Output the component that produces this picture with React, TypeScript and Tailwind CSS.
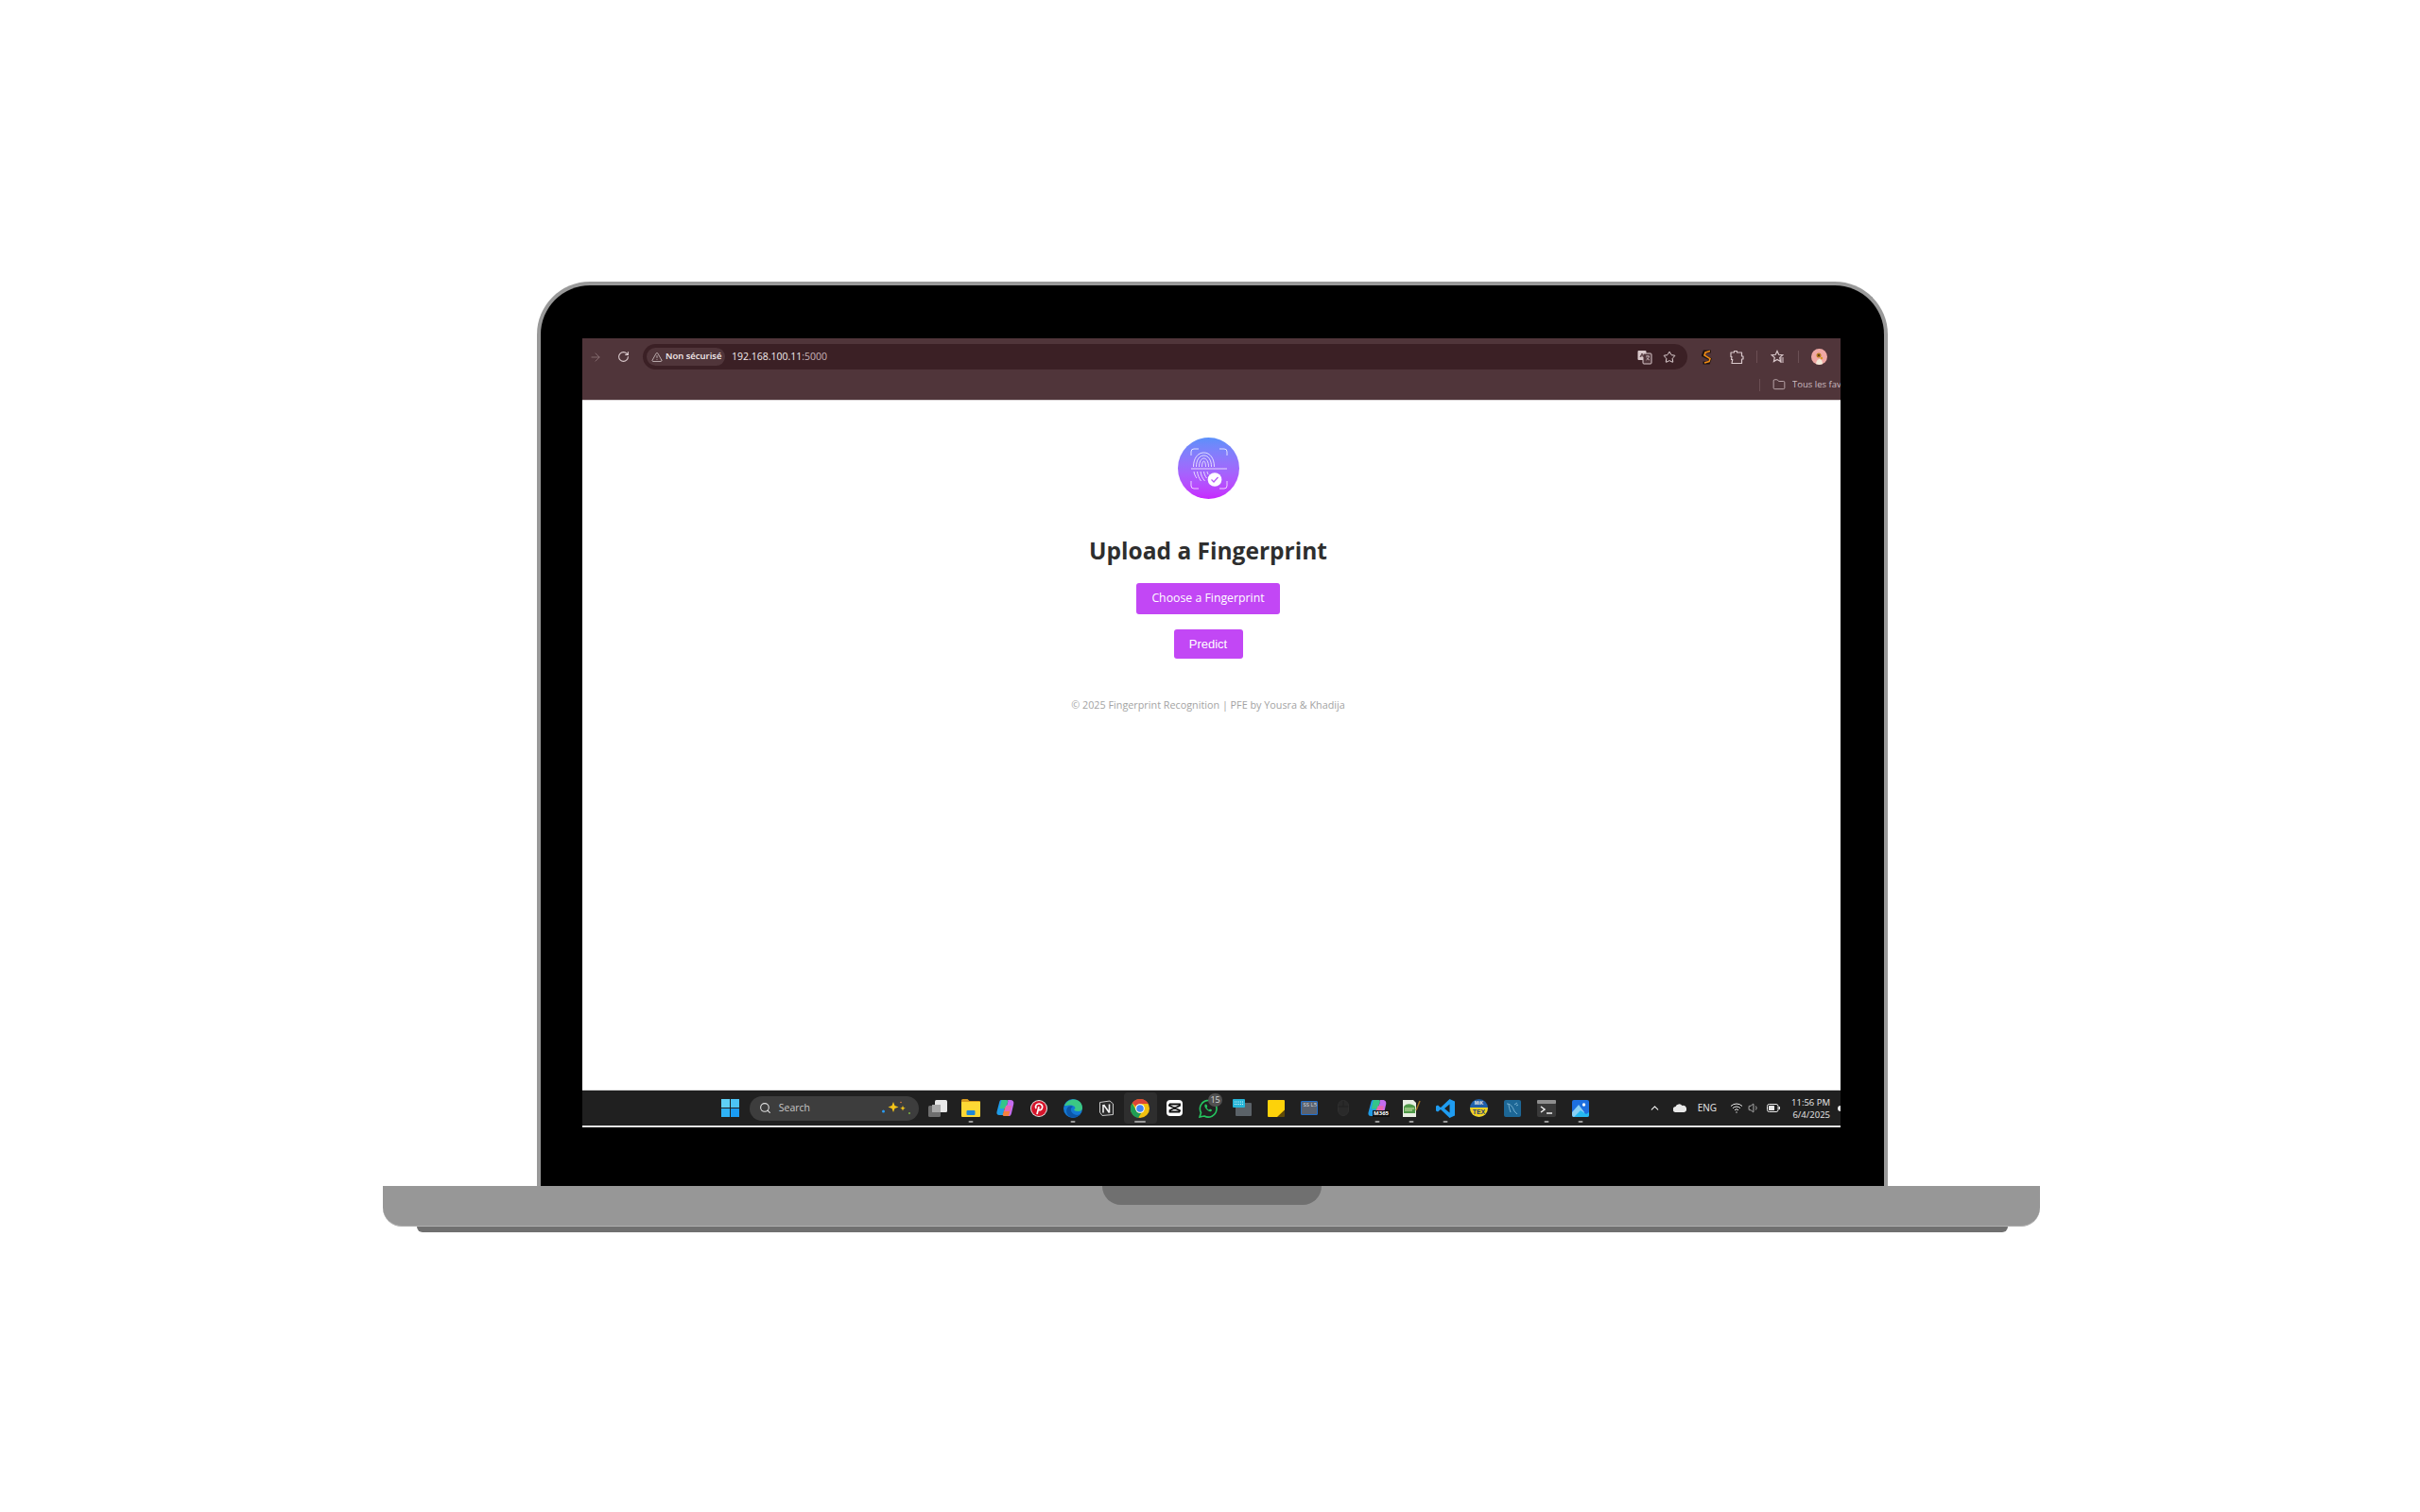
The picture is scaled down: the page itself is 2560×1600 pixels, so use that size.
import { ArrowRight, ChevronUp, Folder, RotateCw, Search, Star, TriangleAlert, Volume1 } from "lucide-react";
import type { ReactNode } from "react";

const segoe = "font-['Open_Sans','Noto_Sans',sans-serif]";

function Divider({ className }: { className: string }) {
	return <span className={`w-px bg-[#6b4f54] ${className}`} />;
}

function TranslateIcon() {
	return (
		<svg width="16" height="16" viewBox="0 0 16 16" aria-hidden="true">
			<rect x="0.5" y="1" width="9" height="10" rx="1" fill="#d9c8cb" />
			<rect x="6" y="4" width="9" height="11" rx="1" fill="#50353a" stroke="#d9c8cb" />
			<path d="M3 8l2-4 2 4M3.8 6.8h2.4" stroke="#50353a" fill="none" />
			<path d="M9 7h4M11 6v1M12.5 7c-.5 2-1.500 3-3 4M10 8.500c.500 1 1.500 2 3 2.500" stroke="#d9c8cb" fill="none" strokeWidth="0.8" />
		</svg>
	);
}

function ExtensionS() {
	return (
		<svg width="12" height="16" viewBox="0 0 12 16" aria-hidden="true">
			<path d="M10 2 3 2 1.500 6 9 10 7.500 14 1.500 14" fill="none" stroke="#1c1210" strokeWidth="3" />
			<path d="M9 1.500 4 3 3 6 9 9.500 8 12.500 3 14" fill="none" stroke="#f08c14" strokeWidth="1.600" />
		</svg>
	);
}

function PuzzleIcon() {
	return (
		<svg width="15" height="16" viewBox="0 0 15 16" aria-hidden="true">
			<path
				d="M1 3h3.500V1.500h3V3H12.500v4H14v3h-1.500v4.500H2l.8-4H1.500l.5-3H1z"
				fill="none"
				stroke="#d9c8cb"
				strokeWidth="1.200"
				strokeLinejoin="round"
			/>
		</svg>
	);
}

function FavoritesIcon() {
	return (
		<svg width="15" height="15" viewBox="0 0 15 15" aria-hidden="true">
			<path
				d="M7 1.500 8.700 5.300l4.100.4-3.100 2.700.9 4.100L7 10.400l-3.600 2.100.9-4.100L1.200 5.700l4.100-.4z"
				fill="none"
				stroke="#d9c8cb"
				strokeWidth="1.200"
			/>
			<path d="M10 9h4M10 11h4M10 13h4" stroke="#d9c8cb" />
		</svg>
	);
}

function Avatar() {
	return (
		<span className="flex h-[17px] w-[17px] items-center justify-center overflow-hidden rounded-full bg-[#f0a8a4]">
			<svg width="17" height="17" viewBox="0 0 17 17" aria-hidden="true">
				<path d="M5 17c0-4 2-6 4-6s3 2 3 6z" fill="#f2ead8" />
				<circle cx="8" cy="7" r="2.500" fill="#b97a1c" />
				<circle cx="8" cy="7" r="1" fill="#4a2d12" />
				<circle cx="11" cy="10" r="1.200" fill="#d89a22" />
			</svg>
		</span>
	);
}

function BrowserChrome() {
	return (
		<div className="h-[66px] shrink-0 border-b border-[#d8d2d3] bg-[#50353a]">
			<div className="flex h-[38px] items-center pt-[1px] pl-[7px]">
				<ArrowRight className="h-[14px] w-[14px] text-[#8a7276]" strokeWidth={1.5} />
				<RotateCw className="ml-[16px] h-[13px] w-[13px] text-[#dccbce]" strokeWidth={2} />
				<div className="ml-[14px] flex h-[27px] w-[1105px] items-center rounded-full bg-[#3b2025] pr-[12px] pl-[4px]">
					<div className="flex h-[19px] w-[83px] items-center gap-[3px] rounded-full bg-[#50353a] pl-[5px]">
						<TriangleAlert className="h-[12px] w-[12px] shrink-0 text-[#f0e6e7]" strokeWidth={1.3} />
						<span className={`${segoe} text-[9.500px] font-semibold whitespace-nowrap text-[#f4eced]`}>Non sécurisé</span>
					</div>
					<span className={`${segoe} ml-[7px] text-[10.500px] text-[#f4eced]`}>
						192.168.100.11<span className="text-[#c9b5b9]">:5000</span>
					</span>
					<span className="ml-auto flex items-center gap-[11px]">
						<TranslateIcon />
						<Star className="h-[14px] w-[14px] text-[#e5d8da]" strokeWidth={1.7} />
					</span>
				</div>
				<span className="ml-[15px] flex w-[12px] justify-center">
					<ExtensionS />
				</span>
				<span className="ml-[18px] flex w-[15px] justify-center">
					<PuzzleIcon />
				</span>
				<Divider className="ml-[13px] h-[13px]" />
				<span className="ml-[14px] flex w-[15px] justify-center">
					<FavoritesIcon />
				</span>
				<Divider className="ml-[14px] h-[13px]" />
				<span className="ml-[13px]">
					<Avatar />
				</span>
			</div>
			<div className="flex h-[22px] items-center justify-end overflow-hidden">
				<Divider className="h-[13px]" />
				<Folder className="ml-[13px] h-[14px] w-[14px] shrink-0 text-[#d9c8cb]" strokeWidth={1.3} />
				<span className={`${segoe} ml-[7px] w-[51px] shrink-0 overflow-hidden text-[9.500px] whitespace-nowrap text-[#cdbcc0]`}>Tous les favoris</span>
			</div>
		</div>
	);
}

function FingerprintLogo() {
	return (
		<div className="flex h-[65px] w-[65px] items-center justify-center rounded-full bg-gradient-to-b from-[#5a90fa] to-[#c724fe]">
			<svg width="65" height="65" viewBox="0 0 65 65" fill="none" stroke="#fff" aria-hidden="true">
				<g strokeWidth="0.9" opacity="0.85">
					<path d="M14 19v-4a3 3 0 0 1 3-3h5M44 12h5a3 3 0 0 1 3 3v4M14 46v5a3 3 0 0 0 3 3h5M52 46v5a3 3 0 0 1-3 3h-5" />
				</g>
				<g strokeWidth="0.9" opacity="0.85">
					<path d="M14 33h38" />
					<path d="M16.500 31c0-9 4.500-15 11-15s11 6 11 15" />
					<path d="M19.500 31c0-7 3-12 8-12s8 5 8 12" />
					<path d="M22.500 31c0-5 2-9 5-9s5 4 5 9" />
					<path d="M25.500 31c0-3 .8-6 2-6s2 3 2 6" />
					<path d="M17 36c.5 3 1.500 5 3 7M20.500 36c.5 4 2 7 4 10M24 36c.5 4 2 7 4.500 10M27.500 36c.5 3 1.500 5 3 7M31 36c.2 1 .5 2 1 3" />
				</g>
				<circle cx="39" cy="44.500" r="7.300" fill="#fff" stroke="none" />
				<path d="M35.500 44.500l2.500 2.500 4.500-5" stroke="#b35cf5" strokeWidth="1.300" />
			</svg>
		</div>
	);
}

function UploadPage() {
	return (
		<main className="flex min-h-0 flex-1 flex-col items-center bg-white pt-[39px] pr-[7px]">
			<FingerprintLogo />
			<h1 className={`${segoe} mt-[37px] text-[24.500px] leading-[36px] font-bold text-[#2e2e2e]`}>Upload a Fingerprint</h1>
			<button className={`${segoe} mt-[16px] flex h-[33px] w-[152px] items-center justify-center rounded-[3px] bg-[#c247f5] text-[12.300px] text-white`}>
				Choose a Fingerprint
			</button>
			<button className="mt-[16px] flex h-[31px] w-[73px] items-center justify-center rounded-[3px] bg-[#c247f5] font-['Liberation_Sans',sans-serif] text-[13px] text-white">
				Predict
			</button>
			<p className={`${segoe} mt-[41px] text-[10.800px] leading-[16px] text-[#a3a3a3]`}>© 2025 Fingerprint Recognition | PFE by Yousra &amp; Khadija</p>
		</main>
	);
}

function WindowsLogo() {
	return (
		<span className="grid h-[19px] w-[19px] grid-cols-2 gap-[1px]">
			<span className="bg-[#5fd0f6]" />
			<span className="bg-[#4cc4f6]" />
			<span className="bg-[#2fb2f6]" />
			<span className="bg-[#1a9cf4]" />
		</span>
	);
}

function TaskViewIcon() {
	return (
		<svg width="20" height="18" viewBox="0 0 20 18" aria-hidden="true">
			<rect x="0" y="6" width="13" height="12" rx="1.500" fill="#6e6e6e" />
			<rect x="7" y="0" width="13" height="13" rx="1.500" fill="#e8e8e8" />
			<rect x="4" y="5" width="9" height="8" fill="#a9a9a9" />
		</svg>
	);
}

function ExplorerIcon() {
	return (
		<svg width="20" height="19" viewBox="0 0 20 19" aria-hidden="true">
			<path d="M0 1.500A1.500 1.500 0 0 1 1.500 0h5l2 2H19a1 1 0 0 1 1 1v3H0z" fill="#d79a1d" />
			<path d="M0 3h20v15a1 1 0 0 1-1 1H1a1 1 0 0 1-1-1z" fill="#fdd835" />
			<rect x="5.500" y="12" width="9" height="5" rx="1" fill="#1e88d8" />
		</svg>
	);
}

function CopilotIcon({ size = 19 }: { size?: number }) {
	return (
		<svg width={size} height={size} viewBox="0 0 19 19" aria-hidden="true">
			<path d="M5 1h6L7 17H3c-2 0-3-1.500-2.500-3.500L3 4c.4-2 1-3 2-3z" fill="#1f9ce8" />
			<path d="M5.500 1H11c1 0 1.500.8 1.200 2L10 10H3.500z" fill="#35c48a" />
			<path d="M14 18H8c-1 0-1.500-.8-1.200-2L9 9h7z" fill="#f5803e" />
			<path d="M12 1h3c2 0 3.800 1.500 3.300 4L16 15c-.4 2-1.300 3-2.500 3H13l2-8H10l2.200-7c.2-1-.2-2-.2-2z" fill="#c56cf0" />
			<path d="M10 7h6l-1.500 6H8.500z" fill="#e866b4" />
		</svg>
	);
}

function PinterestIcon() {
	return (
		<svg width="18" height="18" viewBox="0 0 18 18" aria-hidden="true">
			<circle cx="9" cy="9" r="9" fill="#e8e8e8" />
			<circle cx="9" cy="9" r="8" fill="#d5152b" />
			<path d="M7 15 9 7M6 9c-1.500-3 1-5.200 3.500-5 2.800.2 3.800 2.800 2.800 5-.8 1.800-2.800 2.200-3.800.8" fill="none" stroke="#fff" strokeWidth="1.700" />
		</svg>
	);
}

function EdgeIcon() {
	return (
		<svg width="20" height="20" viewBox="0 0 20 20" aria-hidden="true">
			<circle cx="10" cy="10" r="10" fill="#1479d4" />
			<path d="M1 7c2-5 7-7 11-6.500C17 1.200 20 5 20 9.500c0 2.500-2 3.500-4.500 3.500S11 12 11 11c2 0 2-3-1-4-4-1.200-7 .5-9 0z" fill="#3bc884" />
			<path d="M8 19.500C3.500 18 2 13 4 9.500c1.500-2.500 4.500-2.800 6-1.500-3 1-3 6 1 8 3 1.500 5.500 1 7-.5-2 3-6 5-10 4z" fill="#0c56a8" />
		</svg>
	);
}

function NotionIcon() {
	return (
		<svg width="17" height="17" viewBox="0 0 17 17" aria-hidden="true">
			<path d="M1.500 2.500 12 1l3.500 3v11.500L4 16.500 1.500 13z" fill="#2c2c2c" stroke="#c8c8c8" />
			<path d="M5 5v8.500M5.500 5l6 8.500M11.500 4.500v9" fill="none" stroke="#f2f2f2" strokeWidth="1.600" />
		</svg>
	);
}

function ChromeIcon() {
	return (
		<svg width="20" height="20" viewBox="0 0 20 20" aria-hidden="true">
			<circle cx="10" cy="10" r="10" fill="#f2c110" />
			<path d="M10 0a10 10 0 0 1 8.700 5H10a5 5 0 0 0-4.500 2.800L1.800 4.200A10 10 0 0 1 10 0z" fill="#dc4437" />
			<path d="M1.800 4.200 6 12.500a5 5 0 0 0 5.200 2.400L8 20A10 10 0 0 1 1.800 4.200z" fill="#1f9d55" />
			<circle cx="10" cy="10" r="4.800" fill="#fff" />
			<circle cx="10" cy="10" r="3.800" fill="#4285f4" />
		</svg>
	);
}

function CapcutIcon() {
	return (
		<span className="flex h-[17px] w-[17px] items-center justify-center rounded-[4px] bg-white">
			<svg width="13" height="11" viewBox="0 0 13 11" aria-hidden="true">
				<path d="M1 1.500h11v1.500L1.500 8v1.500H12M1 1.500V3l11 5v1.500" fill="none" stroke="#111" strokeWidth="1.800" />
			</svg>
		</span>
	);
}

function WhatsappIcon() {
	return (
		<span className="relative flex h-[20px] w-[20px]">
			<svg width="20" height="20" viewBox="0 0 20 20" aria-hidden="true">
				<path d="M1 19l1.500-4.500A8.800 8.800 0 1 1 6 18z" fill="#202020" stroke="#25c45f" strokeWidth="1.600" />
				<path d="M7 5.500c-1 1-1 2.500.5 4.500s3.500 3.500 5 3.300c1-.2 1.700-1 1.500-1.800l-2-1-1 1c-1-.4-2-1.500-2.500-2.600l.8-1-.9-2.200z" fill="#25c45f" />
			</svg>
			<span className={`${segoe} absolute -top-[6px] left-[10px] flex h-[14px] w-[15px] items-center justify-center rounded-full bg-[#505050] text-[9px] text-[#d8d8d8]`}>
				15
			</span>
		</span>
	);
}

function KeyboardIcon() {
	return (
		<svg width="20" height="19" viewBox="0 0 20 19" aria-hidden="true">
			<rect x="3" y="4" width="17" height="14" rx="1" fill="#5b6268" />
			<rect x="0" y="0" width="13" height="9" rx="1" fill="#26b5d8" />
			<path d="M2 3h9M2 5.500h9" stroke="#d6f3fa" strokeDasharray="1 1" />
		</svg>
	);
}

function StickyIcon() {
	return (
		<svg width="18" height="18" viewBox="0 0 18 18" aria-hidden="true">
			<path d="M0 1a1 1 0 0 1 1-1h16a1 1 0 0 1 1 1v10l-7 7H1a1 1 0 0 1-1-1z" fill="#fdd20a" />
			<path d="M18 10.500V17a1 1 0 0 1-1 1h-7z" fill="#5f4a08" />
		</svg>
	);
}

function WindowAppIcon() {
	return (
		<span className="flex h-[15px] w-[18px] flex-col rounded-[1px] border border-[#1f6fd0] bg-[#5a6270]">
			<span className={`${segoe} pl-[1px] text-[6px] leading-[7px] text-[#d5d8dd]`}>SS L5</span>
		</span>
	);
}

function MouseIcon() {
	return (
		<svg width="12" height="17" viewBox="0 0 12 17" aria-hidden="true">
			<rect x="0.500" y="0.500" width="11" height="16" rx="5.500" fill="#2a2a2a" stroke="#303030" />
			<path d="M0.500 7h11M6 .5V7" stroke="#202020" />
		</svg>
	);
}

function M365Icon() {
	return (
		<span className="relative flex h-[20px] w-[20px]">
			<CopilotIcon size={20} />
			<span className={`${segoe} absolute top-[12px] left-[5px] bg-[#111] px-[1px] text-[6px] leading-[7px] font-bold text-white`}>M365</span>
		</span>
	);
}

function TexworksIcon() {
	return (
		<svg width="20" height="20" viewBox="0 0 20 20" aria-hidden="true">
			<path d="M1 1h11l3 3v15H1z" fill="#e9efe3" />
			<path d="M2 8c3-4 9-3 12 0v7H2z" fill="#4f9a48" />
			<path d="M3 10h10M3 12h8" stroke="#d6e8b0" />
			<path d="M15 12 19 2" stroke="#a07020" strokeWidth="1.500" />
		</svg>
	);
}

function VscodeIcon() {
	return (
		<svg width="20" height="20" viewBox="0 0 20 20" aria-hidden="true">
			<path d="M14.500 0 20 2.500v15L14.500 20 5 11l-3 2.500L0 12.500V7.500L2 6.500 5 9zM14.500 5.500 9 10l5.500 4.500z" fill="#1f9cf0" />
		</svg>
	);
}

function MiktexIcon() {
	return (
		<span className="flex h-[19px] w-[19px] flex-col items-center overflow-hidden rounded-full bg-[#1f5fa8]">
			<span className="h-[9px] w-full text-center font-['Liberation_Sans',sans-serif] text-[5px] leading-[9px] font-bold text-[#e8e8e8]">MiK</span>
			<span className="h-[10px] w-full bg-[#f4d21f] text-center font-['Liberation_Sans',sans-serif] text-[7px] leading-[9px] font-bold text-[#1f3f78]">TEX</span>
		</span>
	);
}

function MysqlIcon() {
	return (
		<span className="flex h-[18px] w-[18px] items-center justify-center rounded-[2px] bg-[#1d6796]">
			<svg width="16" height="16" viewBox="0 0 16 16" aria-hidden="true">
				<path d="M2 3c4 0 6 3 8 8l3 3M4 3c0 3 1 6 2 9M10 4l3-2M12 5l2-1" fill="none" stroke="#8ec4e0" strokeWidth="0.800" />
			</svg>
		</span>
	);
}

function TerminalIcon() {
	return (
		<svg width="20" height="18" viewBox="0 0 20 18" aria-hidden="true">
			<rect width="20" height="18" rx="2" fill="#3a3a3a" />
			<rect width="20" height="4" rx="1" fill="#8f8f8f" />
			<path d="M4 7l4 3-4 3" fill="none" stroke="#f0f0f0" strokeWidth="1.500" />
			<path d="M10 14h6" stroke="#f0f0f0" strokeWidth="1.500" />
		</svg>
	);
}

function PhotosIcon() {
	return (
		<svg width="18" height="18" viewBox="0 0 18 18" aria-hidden="true">
			<rect width="18" height="18" rx="2" fill="#1d6fe0" />
			<circle cx="12.500" cy="5" r="1.700" fill="#fff" />
			<path d="M0 13 7 5l6 8v5H2a2 2 0 0 1-2-2z" fill="#8ad0f5" />
			<path d="M2 18l7-7 6 4 3-2v3a2 2 0 0 1-2 2z" fill="#26b8f0" />
		</svg>
	);
}

function TaskItem({ children, open, active }: { children: ReactNode; open?: boolean; active?: boolean }) {
	return (
		<div className={`relative flex h-full w-[35.800px] shrink-0 items-center justify-center ${active ? "bg-[#2e2e2e]" : ""} rounded-[4px]`}>
			{children}
			{open && (
				<span className={`absolute bottom-[1px] left-1/2 h-[2px] -translate-x-1/2 rounded-full bg-[#9c9c9c] ${active ? "w-[12px]" : "w-[5px]"}`} />
			)}
		</div>
	);
}

function Taskbar() {
	return (
		<div className={`${segoe} relative flex h-[40px] shrink-0 items-center border-t border-[#d8d8d8] border-b-2 border-b-[#e4e4e4] bg-[#202020] pl-[139px] text-[#e8e8e8]`}>
			<div className="flex h-[33px] items-center">
				<TaskItem>
					<WindowsLogo />
				</TaskItem>
				<div className="ml-[2px] flex h-[26px] w-[179px] shrink-0 items-center rounded-full bg-[#3d3d3d] pr-[8px] pl-[10px]">
					<Search className="h-[13px] w-[13px] text-[#e0e0e0]" strokeWidth={2} />
					<span className="ml-[8px] text-[10.500px] text-[#c8c8c8]">Search</span>
					<svg className="ml-auto" width="32" height="16" viewBox="0 0 32 16" aria-hidden="true">
						<path d="M13 1l1.500 4 4 1.500-4 1.500L13 12l-1.500-4-4-1.500 4-1.500z" fill="#f5c518" />
						<path d="M23 5l.8 2 2 .8-2 .8-.8 2-.8-2-2-.8 2-.8z" fill="#f5c518" />
						<circle cx="2.500" cy="11" r="1.500" fill="#2a9df4" />
						<circle cx="30" cy="13" r="1" fill="#7cb342" />
						<circle cx="21" cy="1.500" r="0.800" fill="#e57a3c" />
					</svg>
				</div>
				<div className="ml-[2px] flex h-full items-center">
					<TaskItem>
						<TaskViewIcon />
					</TaskItem>
					<TaskItem open>
						<ExplorerIcon />
					</TaskItem>
					<TaskItem>
						<CopilotIcon />
					</TaskItem>
					<TaskItem>
						<PinterestIcon />
					</TaskItem>
					<TaskItem open>
						<EdgeIcon />
					</TaskItem>
					<TaskItem>
						<NotionIcon />
					</TaskItem>
					<TaskItem open active>
						<ChromeIcon />
					</TaskItem>
					<TaskItem>
						<CapcutIcon />
					</TaskItem>
					<TaskItem>
						<WhatsappIcon />
					</TaskItem>
					<TaskItem>
						<KeyboardIcon />
					</TaskItem>
					<TaskItem>
						<StickyIcon />
					</TaskItem>
					<TaskItem>
						<WindowAppIcon />
					</TaskItem>
					<TaskItem>
						<MouseIcon />
					</TaskItem>
					<TaskItem open>
						<M365Icon />
					</TaskItem>
					<TaskItem open>
						<TexworksIcon />
					</TaskItem>
					<TaskItem open>
						<VscodeIcon />
					</TaskItem>
					<TaskItem>
						<MiktexIcon />
					</TaskItem>
					<TaskItem>
						<MysqlIcon />
					</TaskItem>
					<TaskItem open>
						<TerminalIcon />
					</TaskItem>
					<TaskItem open>
						<PhotosIcon />
					</TaskItem>
				</div>
			</div>
			<div className="ml-auto flex items-center pr-[11px]">
				<ChevronUp className="h-[13px] w-[13px] text-[#f0f0f0]" strokeWidth={2} />
				<svg className="ml-[13px]" width="14" height="9" viewBox="0 0 14 9" aria-hidden="true">
					<path d="M3 9a3 3 0 0 1-.5-6A4 4 0 0 1 9.500 2 3.500 3.500 0 0 1 11.500 9z" fill="#e8e8e8" />
				</svg>
				<span className="ml-[12px] text-[10px]">ENG</span>
				<svg className="ml-[14px]" width="14" height="11" viewBox="0 0 14 11" fill="none" stroke="#e8e8e8" aria-hidden="true">
					<path d="M1 3.500a8.500 8.500 0 0 1 12 0M3 5.700a5.500 5.500 0 0 1 8 0M5 7.800a2.700 2.700 0 0 1 4 0" />
					<circle cx="7" cy="10" r="0.700" fill="#e8e8e8" stroke="none" />
				</svg>
				<Volume1 className="ml-[5px] h-[13px] w-[13px] text-[#e8e8e8]" strokeWidth={1.3} />
				<svg className="ml-[7px]" width="14" height="9" viewBox="0 0 14 9" aria-hidden="true">
					<rect x="0.500" y="0.500" width="11.500" height="8" rx="2" fill="none" stroke="#e8e8e8" />
					<rect x="2" y="2" width="6" height="5" rx="0.500" fill="#e8e8e8" />
					<rect x="12.500" y="3" width="1.500" height="3" fill="#e8e8e8" />
				</svg>
				<div className="ml-[12px] flex flex-col items-end text-[9.500px] leading-[13px]">
					<span>11:56 PM</span>
					<span>6/4/2025</span>
				</div>
			</div>
			<span className="absolute top-[16px] right-0 h-[6px] w-[3px] rounded-l-full bg-[#e8e8e8]" />
		</div>
	);
}

export default function App() {
	return (
		<div className="min-h-[1600px] bg-white pt-[298px] pl-[405px]">
			<div className="w-[1753px]">
				<div className="ml-[163px] h-[957px] w-[1429px] rounded-t-[56px] border-x-4 border-t-4 border-[#999] bg-black pt-[56px] pl-[44px]">
					<div className="flex h-[835px] w-[1331px] flex-col">
						<BrowserChrome />
						<UploadPage />
						<Taskbar />
					</div>
				</div>
				<div className="flex h-[43px] w-[1753px] justify-center rounded-b-[20px] border-b border-[#b0b0b0] bg-[#979797]">
					<div className="h-[20px] w-[232px] rounded-b-[20px] bg-[#707070]" />
				</div>
				<div className="ml-[36px] h-[6px] w-[1683px] rounded-b-[8px] bg-[#707070]" />
			</div>
		</div>
	);
}
